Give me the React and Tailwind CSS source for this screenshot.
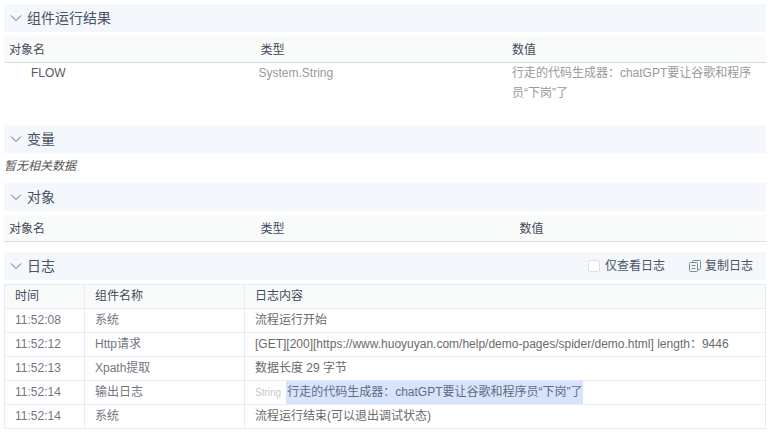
// src/components/debug/RunResultPanel.jsx
import React, { useState } from 'react';

const results = [
    { id: 1, name: 'FLOW', type: 'System.String', value: '行走的代码生成器：chatGPT要让谷歌和程序员“下岗”了' },
];

const logs = [
    { id: 1, time: '11:52:08', component: '系统', content: '流程运行开始' },
    { id: 2, time: '11:52:12', component: 'Http请求', content: '[GET][200][https://www.huoyuyan.com/help/demo-pages/spider/demo.html] length：9446' },
    { id: 3, time: '11:52:13', component: 'Xpath提取', content: '数据长度 29 字节' },
    { id: 4, time: '11:52:14', component: '输出日志', content: '行走的代码生成器：chatGPT要让谷歌和程序员“下岗”了', type: 'String' },
    { id: 5, time: '11:52:14', component: '系统', content: '流程运行结束(可以退出调试状态)' },
];

function ChevronIcon({ open }) {
    return (
        <svg viewBox="0 0 12 12" className={`w-3 h-3 ${open ? '' : '-rotate-90'}`} fill="none" stroke="currentColor" strokeWidth="1">
            <path d="M1 3.5 L6 8.5 L11 3.5" />
        </svg>
    );
}

function CopyIcon() {
    return (
        <svg viewBox="0 0 12 12" className="w-3 h-3" fill="none" stroke="#7d8896" strokeWidth="1" strokeLinejoin="round">
            <path d="M3.5 2.5 V1.5 Q3.5 0.5 4.5 0.5 H10.5 Q11.5 0.5 11.5 1.5 V8.5 Q11.5 9.5 10.5 9.5 H8.5" />
            <path d="M1.5 2.5 H7.5 Q8.5 2.5 8.5 3.5 V10.5 Q8.5 11.5 7.5 11.5 H1.5 Q0.5 11.5 0.5 10.5 V3.5 Q0.5 2.5 1.5 2.5 Z" />
            <path d="M2.5 5.5 H6.5 M2.5 8.5 H6.5" />
        </svg>
    );
}

function Section({ title, actions, className = '', children }) {
    const [open, setOpen] = useState(true);

    return (
        <section className={className}>
            <div className="flex items-center justify-between h-7 pl-1.5 pr-[13px] bg-[#f4f7fc]">
                <button type="button" aria-expanded={open} onClick={() => setOpen(!open)} className="flex items-center gap-[5px] text-sm text-[#4a5262]">
                    <span className="text-[#5a6b80]"><ChevronIcon open={open} /></span>
                    {title}
                </button>
                {actions}
            </div>
            {open && children}
        </section>
    );
}

function ObjectTable({ rows, typeWidth }) {
    return (
        <table className="w-full mt-1 table-fixed border-separate border-spacing-0">
            <thead>
                <tr className="h-[27px] bg-[#f9fbfa] text-left text-[#444b5a]">
                    <th className="w-[33%] px-[5px] pt-0.5 border-b border-[#d9dedd] font-normal">对象名</th>
                    <th className={`${typeWidth} px-[5px] pt-0.5 border-b border-[#d9dedd] font-normal`}>类型</th>
                    <th className="px-[5px] pt-0.5 border-b border-[#d9dedd] font-normal">数值</th>
                </tr>
            </thead>
            <tbody>
                {rows.map(r => (
                    <tr key={r.id} className="align-top leading-5 text-[#999999]">
                        <td className="pl-[27px] text-[#555b66]">{r.name}</td>
                        <td className="pl-[3px]">{r.type}</td>
                        <td className="px-[5px]">{r.value}</td>
                    </tr>
                ))}
            </tbody>
        </table>
    );
}

export default function App() {
    const [onlyLogs, setOnlyLogs] = useState(false);

    const handleCopy = () => {
        const text = logs.map(l => `${l.time} ${l.component} ${l.content}`).join('\n');
        navigator.clipboard?.writeText(text);
    };

    const visibleLogs = onlyLogs ? logs.filter(l => l.type) : logs;

    return (
        <div className="p-1 bg-white text-xs font-['Liberation_Sans','Noto_Sans_CJK_SC',sans-serif]">
            <Section title="组件运行结果">
                <ObjectTable rows={results} typeWidth="w-[33%]" />
            </Section>

            <Section title="变量" className="mt-[22px]">
                <p className="pt-[3px] leading-5 italic text-[#555555]">暂无相关数据</p>
            </Section>

            <Section title="对象" className="mt-[7px]">
                <ObjectTable rows={[]} typeWidth="w-[34%]" />
            </Section>

            <Section
                title="日志"
                className="mt-2.5"
                actions={
                    <div className="flex items-center gap-6 text-[#4a5262]">
                        <label className="flex items-center gap-[5px]">
                            <input
                                type="checkbox"
                                checked={onlyLogs}
                                onChange={e => setOnlyLogs(e.target.checked)}
                                className="w-3 h-3 appearance-none rounded-[2px] border border-[#dcdfe6] bg-white checked:bg-blue-500"
                            />
                            仅查看日志
                        </label>
                        <button type="button" onClick={handleCopy} className="flex items-center gap-1">
                            <CopyIcon /> 复制日志
                        </button>
                    </div>
                }
            >
                <table className="w-full mt-1 table-fixed border-collapse border border-[#e8ebf5] leading-[23px]">
                    <thead>
                        <tr className="h-6 bg-[#f9fbfa] text-left text-[#444b5a]">
                            <th className="w-20 px-2.5 border border-[#e8ebf5] font-normal">时间</th>
                            <th className="w-40 px-2.5 border border-[#e8ebf5] font-normal">组件名称</th>
                            <th className="px-2.5 border border-[#e8ebf5] font-normal">日志内容</th>
                        </tr>
                    </thead>
                    <tbody>
                        {visibleLogs.map(l => (
                            <tr key={l.id} className="h-6 text-[#74767f]">
                                <td className="px-2.5 border border-[#e8ebf5]">{l.time}</td>
                                <td className="px-2.5 border border-[#e8ebf5]">{l.component}</td>
                                <td className="px-2.5 border border-[#e8ebf5] text-[#6b6b6b]">
                                    {l.type ? (
                                        <div className="flex items-center gap-[5px]">
                                            <span className="text-[10px] text-[#c8c8c8]">{l.type}</span>
                                            <span className="px-px bg-[#d8e4fb] text-[#626b80]">{l.content}</span>
                                        </div>
                                    ) : l.content}
                                </td>
                            </tr>
                        ))}
                    </tbody>
                </table>
            </Section>
        </div>
    );
}
